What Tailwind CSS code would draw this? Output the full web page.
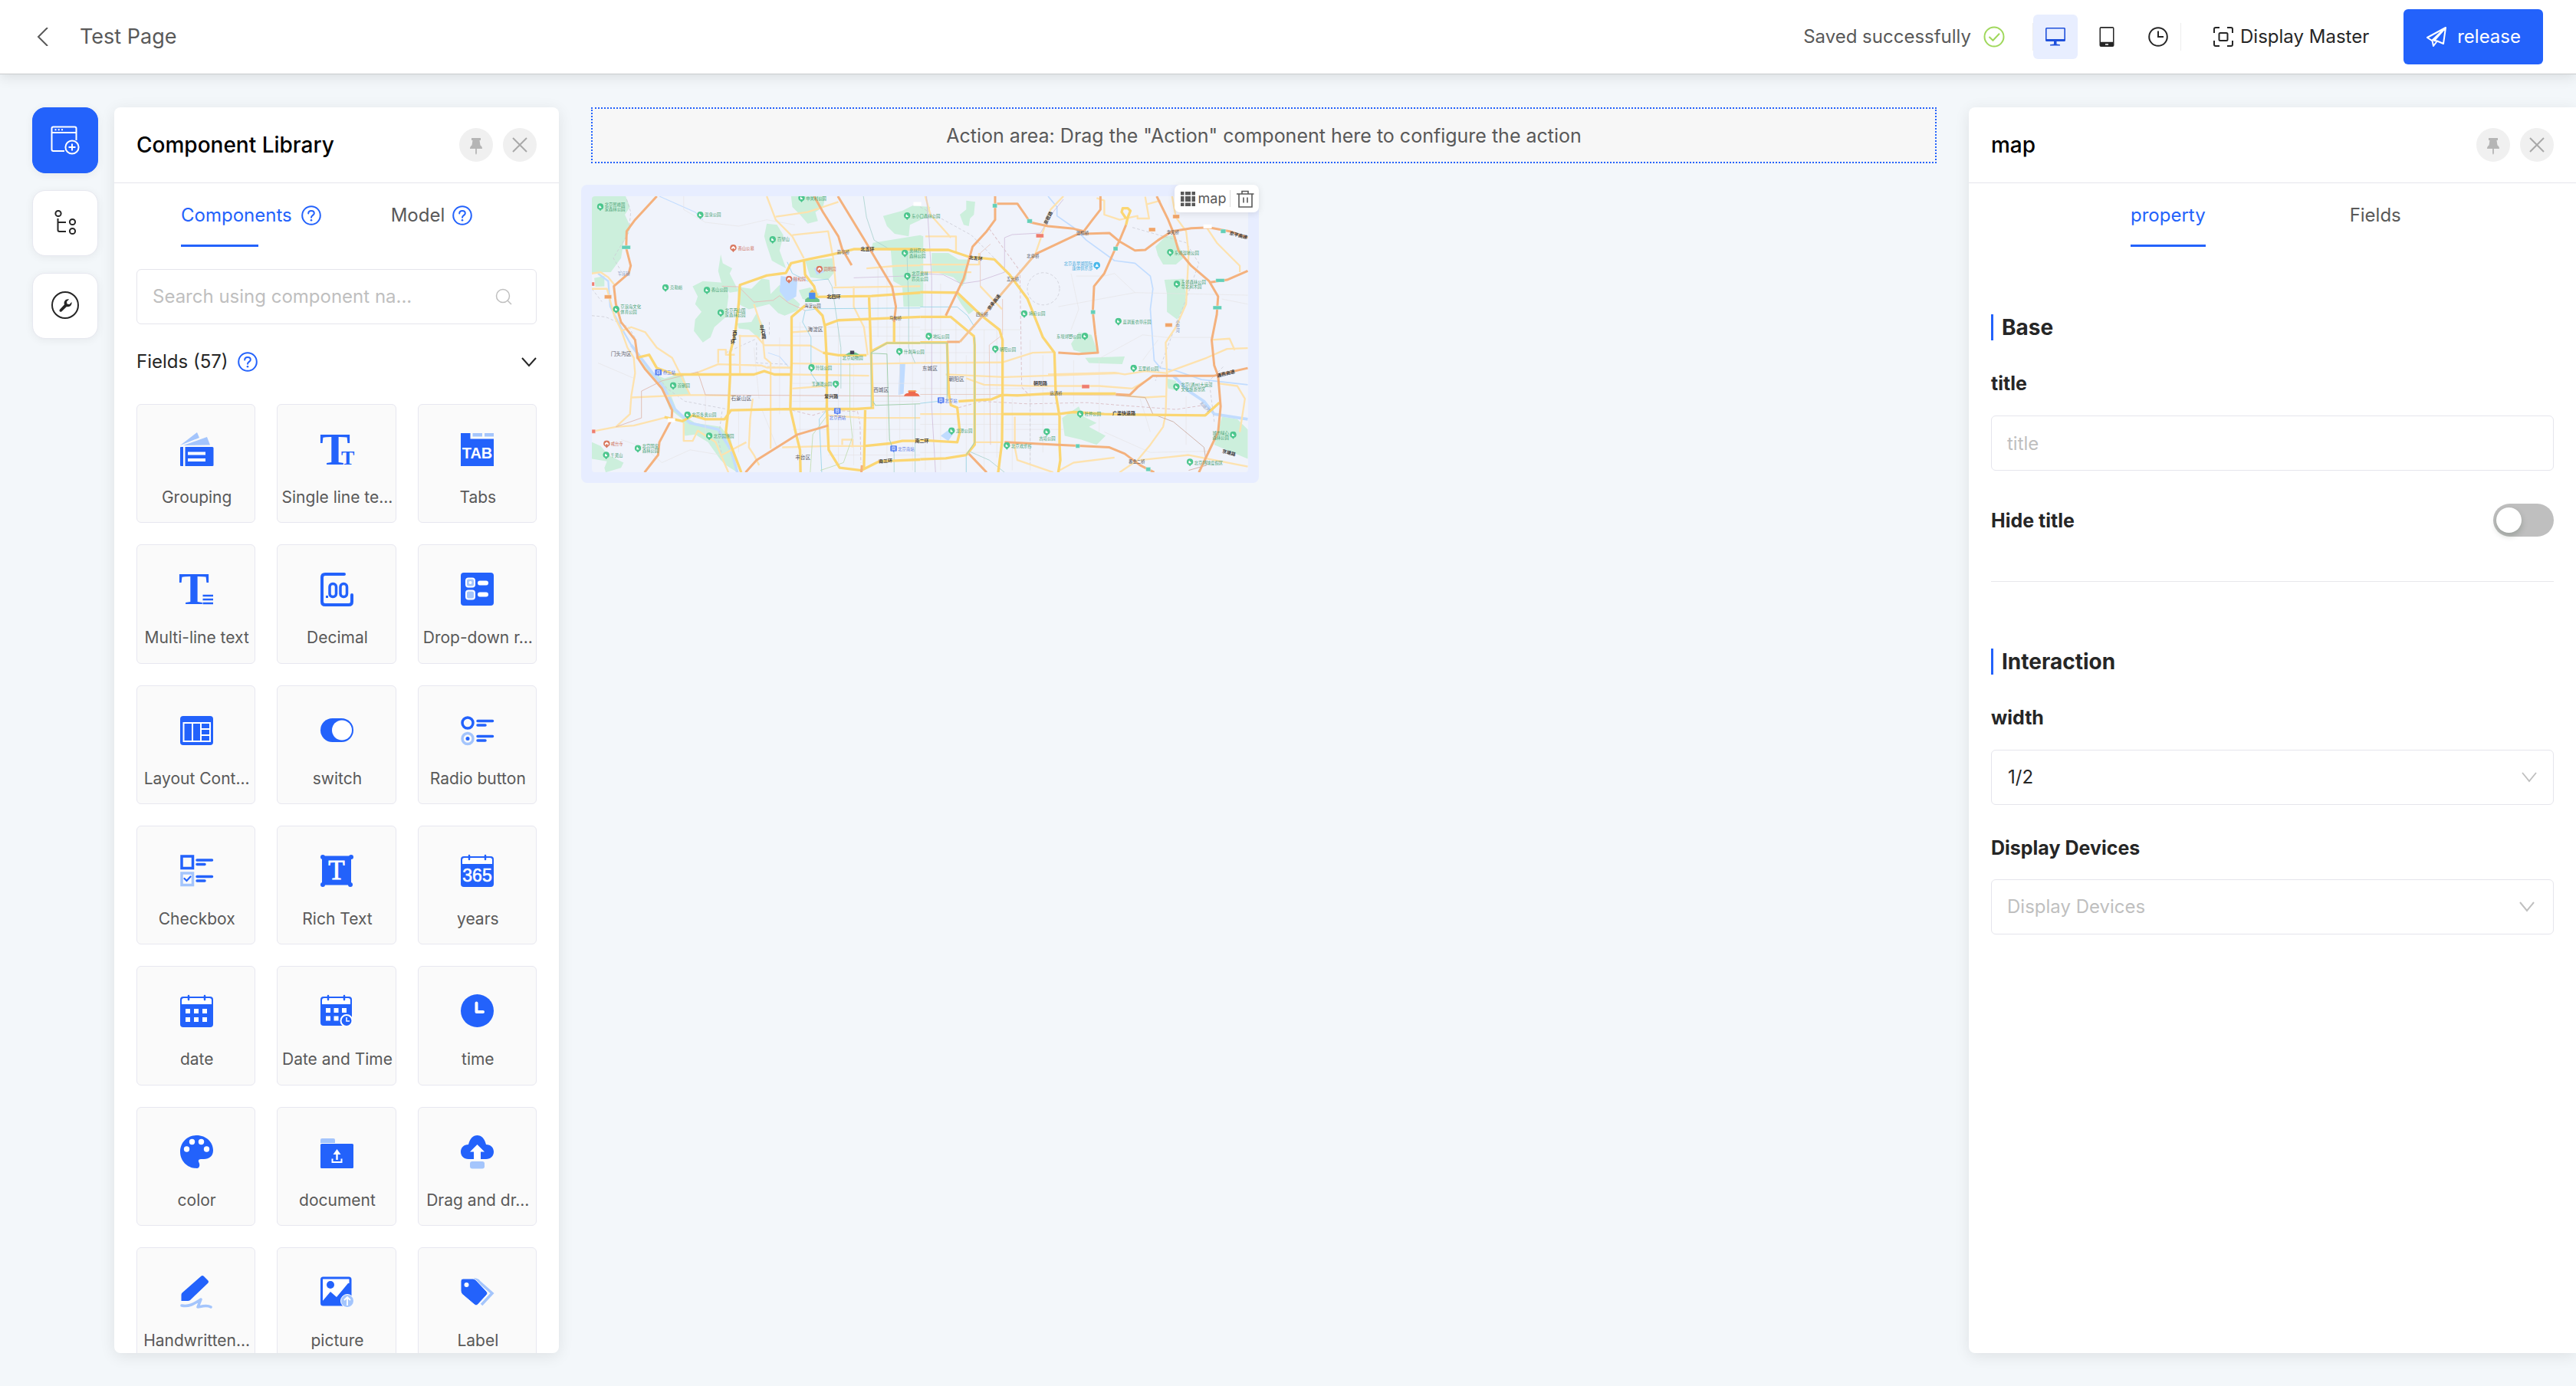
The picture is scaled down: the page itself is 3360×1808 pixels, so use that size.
<!DOCTYPE html>
<html lang="en">
<head>
<meta charset="utf-8">
<title>Test Page</title>
<script src="https://cdn.jsdelivr.net/npm/@tailwindcss/browser@4"></script>
</head>
<body class="flex h-screen flex-col overflow-hidden bg-[#f3f7fa] font-['Inter',sans-serif] text-[24px] leading-[36px] text-[#262626]">

<svg class="hidden" aria-hidden="true">
  <symbol id="help" viewBox="0 0 26 26" fill="none" stroke="#2362fb" stroke-width="2" stroke-linecap="round"><circle cx="13" cy="13" r="11.8"/><path d="M9.2 10.4C9.2 8.2 10.900 6.900 13 6.900s3.800 1.300 3.800 3.300c0 2.600-3.800 2.700-3.800 5.500"/><path d="M13 19.200v.1" stroke-width="2.600"/></symbol>
  <symbol id="pushpin" viewBox="0 0 44 44"><path fill="#b5b5b5" d="M16 13h12v3h-1.500l1 6.500c1.600 1 2.500 2.500 2.500 4.500h-7.100v6l-.9 2-.9-2v-6H14c0-2 .9-3.500 2.500-4.500l1-6.500H16z"/></symbol>
  <symbol id="cross" viewBox="0 0 44 44"><path fill="none" stroke="#a9a9a9" stroke-width="2" d="M13 13l18 18M31 13L13 31"/></symbol>
  <symbol id="pin" viewBox="0 0 28 32"><path fill="#4cc68d" d="M14 1a12.500 12.500 0 0 1 5 24l-5 6-5-6a12.500 12.500 0 0 1 5-24z"/><path fill="#fff" d="M9 19v-8l4-3v4l5 3v4z"/></symbol>
  <symbol id="pinr" viewBox="0 0 28 32"><path fill="#d9785f" d="M14 1a12.500 12.500 0 0 1 5 24l-5 6-5-6a12.500 12.500 0 0 1 5-24z"/><path fill="#fff" d="M7 12l7-5 7 5v7h-4v-4h-6v4H7z"/></symbol>
  <symbol id="rail" viewBox="0 0 28 30"><path fill="#5b83f2" d="M4 1h20q3 0 3 3v17q0 3-3 3h-7l-3 4-3-4H4q-3 0-3-3V4q0-3 3-3z"/><path fill="none" stroke="#fff" stroke-width="2" d="M9 6h10v11H9zM11 11h6M9 20l2-3M19 20l-2-3"/></symbol>
</svg>

<header class="z-10 flex h-[97px] shrink-0 items-center border-b border-[#c9cbcd] bg-white pr-[43px] pl-11 shadow-[0_4px_16px_rgba(0,0,0,0.10)]">
  <button aria-label="Back" class="size-6 text-[#595959]"><svg viewBox="0 0 24 24" class="size-6" fill="none" stroke="currentColor" stroke-width="2"><path d="M18 0L6 12l12 12"/></svg></button>
  <h1 class="ml-9 text-[27px] text-[#595959]">Test Page</h1>
  <div class="ml-auto flex items-center">
    <span class="text-[#595959]">Saved successfully</span>
    <svg class="ml-4 size-7" viewBox="0 0 28 28" fill="none" stroke="#a0d85c" stroke-width="2"><circle cx="14" cy="14" r="12.500"/><path d="M7.500 14l5 4.800 8.500-9"/></svg>
    <div class="ml-9 flex h-9 items-center gap-[9px] border-x border-[#ededed]">
      <button aria-label="Desktop" class="grid size-[58px] place-items-center rounded-[6px] bg-[#e8eeff]">
        <svg class="size-[26px]" viewBox="0 0 26 26"><path fill="#1f50db" fill-rule="evenodd" d="M1.500 1h23q1.500 0 1.500 1.500v15q0 1.500-1.500 1.500h-10v3.500l4.500.8V24.500H6v-1.200l5-.8V19H1.500Q0 19 0 17.500v-15Q0 1 1.500 1zM1.600 2.600v13.400h22.800V2.600z"/></svg>
      </button>
      <button aria-label="Tablet" class="grid size-[58px] place-items-center rounded-[6px]">
        <svg class="size-[26px]" viewBox="0 0 26 26"><path fill="#262626" fill-rule="evenodd" d="M5.500 0h15q2 0 2 2v22q0 2-2 2h-15q-2 0-2-2V2q0-2 2-2zM5 1.700v18h16v-18zM11 22.200h4v1.600h-4z"/></svg>
      </button>
      <button aria-label="History" class="grid size-[58px] place-items-center rounded-[6px]">
        <svg class="size-[26px]" viewBox="0 0 26 26" fill="none" stroke="#262626" stroke-width="2"><circle cx="13" cy="13" r="11.800"/><path d="M13 5.500V13h7"/></svg>
      </button>
    </div>
    <button class="ml-[42px] flex items-center gap-[9px] text-[#262626]">
      <svg class="size-[26px]" viewBox="0 0 26 26" fill="none" stroke="#262626" stroke-width="2"><path d="M1 8V3q0-2 2-2h5M18 1h5q2 0 2 2v5M25 18v5q0 2-2 2h-5M8 25H3q-2 0-2-2v-5"/><rect x="7.500" y="8" width="11" height="10" rx="1.500"/></svg>
      Display Master
    </button>
    <button class="ml-[45px] flex h-[72px] items-center gap-[13px] rounded-[6px] bg-[#2362fb] px-[29px] text-white">
      <svg class="size-7" viewBox="0 0 28 28" fill="none" stroke="#fff" stroke-width="2" stroke-linejoin="round"><path d="M26 2L2 15l6 4L26 2l-3 21-8-3.500-5 6.500-1.500-7M26 2L11 19l4 .5"/></svg>
      release
    </button>
  </div>
</header>

<main class="flex min-h-0 flex-1 pt-[43px] pb-[43px] pl-[42px]">

  <nav aria-label="Tools" class="flex shrink-0 flex-col gap-[22px] [&>button]:grid [&>button]:size-[86px] [&>button]:place-items-center [&>button]:rounded-[17px] [&>button]:border [&>button]:shadow-[0_2px_12px_rgba(0,0,0,0.06)]">
    <button aria-label="Component library" class="border-[#2362fb] bg-[#2362fb]">
      <svg class="size-[38px]" viewBox="0 0 38 38" fill="none" stroke="#fff" stroke-width="2"><path d="M18 33H3.500Q1.500 33 1.500 31V3.500Q1.500 1.500 3.500 1.500h28q2 0 2 2V19M1.500 9h32"/><path d="M5.500 5.300h2M9.700 5.300h2M14 5.300h2"/><circle cx="28" cy="28" r="8.600"/><path d="M28 23.500v9M23.500 28h9"/></svg>
    </button>
    <button aria-label="Outline" class="border-[#e7e8f0] bg-white">
      <svg class="size-[38px]" viewBox="0 0 38 38" fill="none" stroke="#262626" stroke-width="2"><circle cx="10" cy="6.500" r="3.600"/><circle cx="28.500" cy="17.500" r="3.600"/><circle cx="28.500" cy="29.500" r="3.600"/><path d="M9.500 13v15q0 2 2 2H20M9.500 18H20"/></svg>
    </button>
    <button aria-label="Settings" class="border-[#e7e8f0] bg-white">
      <svg class="size-[38px]" viewBox="0 0 38 38"><circle cx="19" cy="18" r="17" fill="none" stroke="#262626" stroke-width="2"/><path fill="#262626" d="M24 10.500l-3 3 .5 3 3 .5 3-3c.6 4-2.500 7-6.500 6l-6.500 6.300c-2 1.500-4-.5-2.500-2.500l6-6.500c-1.500-4 2-8 6-6.800z"/></svg>
    </button>
  </nav>

  <section aria-label="Component Library" class="ml-[21px] w-[580px] shrink-0 overflow-hidden rounded-lg bg-white shadow-[0_4px_20px_rgba(0,0,0,0.09)]">
    <div class="flex h-[99px] items-center border-b border-[#e5e5ec] px-[29px]">
      <h2 class="text-[28px] font-medium text-black">Component Library</h2>
      <button aria-label="Pin panel" class="ml-auto size-11 rounded-full bg-[#f0f0f0]"><svg class="size-full"><use href="#pushpin"/></svg></button>
      <button aria-label="Close panel" class="ml-[13px] size-11 rounded-full bg-[#f0f0f0]"><svg class="size-full"><use href="#cross"/></svg></button>
    </div>
    <div class="flex h-[83px] gap-[91px] pt-6 pl-[87px]">
      <button class="relative flex items-center gap-3 self-start text-[#2362fb]">Components <svg class="size-[26px]"><use href="#help"/></svg><span class="absolute top-[56px] left-0 h-[3px] w-[101px] bg-[#2362fb]"></span></button>
      <button class="flex items-center gap-[10px] self-start text-[#595959]">Model <svg class="size-[26px]"><use href="#help"/></svg></button>
    </div>
    <div class="mx-[29px] mt-[29px] flex h-[72px] items-center rounded-[6px] border border-[#e5e5ec] pr-[31px] pl-[20px]">
      <input type="search" aria-label="Search components" placeholder="Search using component na..." class="min-w-0 flex-1 bg-transparent outline-none placeholder:text-[#bfbfbf]">
      <svg class="size-[22px]" viewBox="0 0 22 22" fill="none" stroke="#bfbfbf" stroke-width="1.500"><circle cx="10" cy="10" r="8.500"/><path d="M16 16l5 5"/></svg>
    </div>
    <button class="mt-[31px] flex h-9 w-full items-center gap-3 px-[29px]">Fields (57) <svg class="size-[26px]"><use href="#help"/></svg><svg class="ml-auto size-5" viewBox="0 0 20 20" fill="none" stroke="#262626" stroke-width="2"><path d="M1 5l9 10 9-10"/></svg></button>

    <div class="mx-[29px] mt-[37px] grid grid-cols-3 gap-7 text-[21px] leading-8 text-[#595959] [&_svg]:size-11 [&_svg]:overflow-visible [&>button]:flex [&>button]:aspect-square [&>button]:min-w-0 [&>button]:flex-col [&>button]:items-center [&>button]:gap-[25px] [&>button]:whitespace-nowrap [&>button]:rounded-[6px] [&>button]:border [&>button]:border-[#e7e7f0] [&>button]:bg-[#fafafa] [&>button]:pt-[36px] [&>button]:pl-[2px]">
      <button><svg viewBox="0 0 44 44"><path fill="#a4c5fc" d="M0 17L22 0l3 7zM4 17L35 6l4 10.500z"/><path fill="#2362fb" d="M1 19h3v25H1q-1 0-1-1V20q0-1 1-1zM6.500 19H42q1.500 0 1.500 1.500V43q0 1-1.500 1H6.500z"/><path stroke="#fff" stroke-width="4" d="M10 27.500h23M10 36h23"/></svg>Grouping</button>
      <button><svg viewBox="0 0 44 44" fill="#2362fb" class="font-['Liberation_Serif',serif] font-bold"><text x="-1" y="42" font-size="60">T</text><text x="27" y="42" font-size="26">T</text></svg>Single line te...</button>
      <button><svg viewBox="0 0 44 44" class="font-['Liberation_Sans',sans-serif] font-bold"><path fill="#2362fb" d="M0 1h12.500v7.500H43V44H0z"/><path fill="#a4c5fc" d="M15.500 1H28v4.500H15.500zM31 1h12v4.500H31z"/><text x="21.500" y="34" font-size="20" text-anchor="middle" fill="#fff">TAB</text></svg>Tabs</button>

      <button><svg viewBox="0 0 44 44" fill="#2362fb" class="font-['Liberation_Serif',serif] font-bold"><text x="-2" y="41" font-size="60">T</text><path fill="none" stroke="#2362fb" stroke-width="2.500" d="M29.500 30H43M29.500 35H43M29.500 40H43"/></svg>Multi-line text</button>
      <button><svg viewBox="0 0 44 44" fill="none" stroke="#2362fb" stroke-width="4" stroke-linecap="round"><path d="M31 2H6Q2 2 2 6v32q0 4 4 4h31q4 0 4-4v-9"/><rect x="12" y="14.500" width="8.500" height="17" rx="4" stroke-width="3.500"/><rect x="26" y="14.500" width="8.500" height="17" rx="4" stroke-width="3.500"/><path stroke-width="3" stroke-linecap="butt" d="M7 31.500h3"/></svg>Decimal</button>
      <button><svg viewBox="0 0 44 44"><rect y="0" width="43" height="43" rx="4" fill="#2362fb"/><rect x="7" y="7.500" width="11" height="11" rx="3" fill="#a4c5fc" stroke="#fff" stroke-width="2"/><rect x="7" y="23.500" width="11" height="11" rx="3" fill="#a4c5fc" stroke="#fff" stroke-width="2"/><circle cx="12.500" cy="13" r="2" fill="#fff"/><path stroke="#fff" stroke-width="6" stroke-linecap="round" d="M25 13.500h8M25 28.500h8"/></svg>Drop-down r...</button>

      <button><svg viewBox="0 0 44 44"><rect y="3" width="43" height="38" rx="4" fill="#2362fb"/><path fill="#fff" d="M3.500 11h36.500v26H3.500z"/><path fill="#2362fb" d="M5.500 13h9.500v22H5.500zM17 13h9v22h-9zM28 13h10v6H28zM28 21h10v6H28zM28 29h10v6H28z"/></svg>Layout Cont...</button>
      <button><svg viewBox="0 0 44 44"><rect y="6" width="43" height="31" rx="15.500" fill="#2362fb"/><circle cx="28" cy="21.500" r="13" fill="#fff"/></svg>switch</button>
      <button><svg viewBox="0 0 44 44" fill="none" stroke="#2362fb" stroke-linecap="round"><circle cx="9" cy="12" r="7" stroke-width="3.500"/><circle cx="9" cy="32.500" r="7" stroke="#a4c5fc" stroke-width="3.500"/><circle cx="9" cy="32.500" r="2.500" fill="#2362fb" stroke="none"/><path stroke-width="3.500" d="M22 9.500h19.500M22 15h10M22 29.500h19.500M22 35h10"/></svg>Radio button</button>

      <button><svg viewBox="0 0 44 44" fill="none" stroke="#2362fb" stroke-linecap="round"><rect x="2" y="3" width="14.500" height="15.500" stroke-width="3.500"/><rect x="2" y="25" width="14.500" height="15.500" stroke="#a4c5fc" stroke-width="3.500"/><path stroke-width="2.200" d="M5.500 32l3 3 5-5.500"/><path stroke-width="3.500" d="M22 8h19.500M22 13.500h10M22 29.500h19.500M22 35h10"/></svg>Checkbox</button>
      <button><svg viewBox="0 0 44 44" fill="#2362fb" class="font-['Liberation_Serif',serif]"><rect x="2" y="2.500" width="38" height="38"/><circle cx="3" cy="4" r="3"/><circle cx="40" cy="4" r="3"/><circle cx="3" cy="40" r="3"/><circle cx="39" cy="40" r="3"/><text x="21" y="33" font-size="35" text-anchor="middle" fill="#fff" stroke="#fff" stroke-width=".8">T</text></svg>Rich Text</button>
      <button><svg viewBox="0 0 44 44" class="font-['Liberation_Sans',sans-serif]"><path fill="#2362fb" d="M4 3h35q4 0 4 4v32q0 4-4 4H4q-4 0-4-4V7q0-4 4-4z"/><path fill="#fff" d="M2 13V8q0-3 3-3h33q3 0 3 3v5z"/><path stroke="#2362fb" stroke-width="2.500" stroke-linecap="round" d="M11 2v5M32 2v5"/><text x="21.500" y="36" font-size="23" text-anchor="middle" fill="#fff" stroke="#fff" stroke-width=".6">365</text></svg>years</button>

      <button><svg viewBox="0 0 44 44"><path fill="#2362fb" d="M4 3h35q4 0 4 4v32q0 4-4 4H4q-4 0-4-4V7q0-4 4-4z"/><path fill="#fff" d="M2 13V8q0-3 3-3h33q3 0 3 3v5z"/><path stroke="#2362fb" stroke-width="2.500" stroke-linecap="round" d="M11 2v5M32 2v5"/><path stroke="#fff" stroke-width="6" stroke-dasharray="6 5" d="M7 22h28M7 33h28"/></svg>date</button>
      <button><svg viewBox="0 0 44 44"><path fill="#2362fb" d="M4 3h33q4 0 4 4v30q0 4-4 4H4q-4 0-4-4V7q0-4 4-4z"/><path fill="#fff" d="M2 13V8q0-3 3-3h31q3 0 3 3v5z"/><path stroke="#2362fb" stroke-width="2.500" stroke-linecap="round" d="M10 2v5M31 2v5"/><path stroke="#fff" stroke-width="6" stroke-dasharray="6 4.500" d="M7 21h28M7 31.500h17"/><circle cx="34" cy="34.500" r="7.500" fill="#2362fb" stroke="#fff" stroke-width="2"/><path fill="none" stroke="#fff" stroke-width="1.500" d="M34 30v5h4"/></svg>Date and Time</button>
      <button><svg viewBox="0 0 44 44"><circle cx="21.500" cy="21.500" r="21.500" fill="#2362fb"/><path fill="none" stroke="#fff" stroke-width="4" stroke-linecap="round" stroke-linejoin="round" d="M20.500 11.500v11.500h8.500"/></svg>time</button>

      <button><svg viewBox="0 0 44 44"><path fill="#2362fb" d="M21.500 0C34 0 43 9 43 19.500 43 27 38 31 31 31h-4c-3 0-4 2-2.500 4.500 1.500 3 1 7.500-3 7.500C9 43 0 33 0 21.500 0 9.500 9 0 21.500 0z"/><g fill="#fff"><circle cx="15.500" cy="8.500" r="3.700"/><circle cx="27.500" cy="8.500" r="3.700"/><circle cx="8.500" cy="18" r="3.700"/><circle cx="34.500" cy="18" r="3.700"/></g></svg>color</button>
      <button><svg viewBox="0 0 44 44"><path fill="#a4c5fc" d="M2 4h15q2 0 2 2v4H0V6q0-2 2-2z"/><rect y="11" width="43" height="32" rx="1.500" fill="#2362fb"/><path fill="#fff" d="M21.500 18l5 7h-3.800v7h-2.400v-7h-3.800z"/><path fill="none" stroke="#fff" stroke-width="2" d="M15.500 30.500v4.500h12v-4.500"/></svg>document</button>
      <button><svg viewBox="0 0 44 44"><path fill="#2362fb" d="M10 12C12 4 16 0 21.500 0S31 4 33 12c6 0 10 4 10 9.500S39 31 33 31H10C4 31 0 27 0 21.500S4 12 10 12z"/><path fill="#fff" d="M21.500 12l9.500 9.500h-5V31.500h-9V21.500h-5z"/><rect x="12" y="34" width="19" height="9.500" rx="3" fill="#a4c5fc"/></svg>Drag and dr...</button>

      <button><svg viewBox="0 0 44 44"><path fill="#2362fb" d="M27 1q2-2 4 0l5 5q2 2 0 4L13 32q-1.500 1-3 1H1.500V25q0-1.500 1-2.500z"/><path fill="none" stroke="#a4c5fc" stroke-width="3.500" stroke-linecap="round" stroke-linejoin="round" d="M2 39c9 2 16-2 25-8l-4 10c6-1 12-3 17 0"/></svg>Handwritten...</button>
      <button><svg viewBox="0 0 44 44"><rect x="1.500" y="3" width="37.500" height="35" rx="2" fill="#fff" stroke="#2362fb" stroke-width="3"/><circle cx="13" cy="12" r="5" fill="#2362fb"/><path fill="#2362fb" d="M2 34l11-13 8 7 15-18h4v29H2z"/><circle cx="35" cy="33" r="8.500" fill="#a4c5fc" stroke="#fff" stroke-width="1"/><path fill="none" stroke="#fff" stroke-width="1.800" d="M35 39V28M31 32l4-4 4 4"/></svg>picture</button>
      <button><svg viewBox="0 0 44 44"><path fill="none" stroke="#a4c5fc" stroke-width="3.500" d="M17 5q5 0 7 3l17 15-14 15"/><path fill="#2362fb" stroke="#fafafa" stroke-width="1" d="M3 4h13q2 0 4 2l14 15q2 2 0 4L22 38q-2 2-4 0L1.500 24Q0 22 0 20V7q0-3 3-3z"/><circle cx="7.500" cy="12" r="3" fill="#fff"/></svg>Label</button>
    </div>
  </section>

  <section aria-label="Canvas" class="min-w-0 flex-1 px-[42px]">
    <p class="flex h-[73px] items-center justify-center border-2 border-dotted border-[#2362fb] bg-[#f7f7f7] text-[25px] text-[#595959]">Action area: Drag the "Action" component here to configure the action</p>
    <div class="-mx-[13px] mt-7 grid grid-cols-2 gap-[14px]">
      <div class="relative rounded-lg bg-[#e7edff] px-[14px] pt-[15px] pb-[14px]">
        <svg viewBox="36 48 2565 1080" class="block w-full rounded-sm bg-[#f0f3fb] font-['Noto_Sans_CJK_SC',sans-serif]" role="img" aria-label="Map of Beijing" stroke-linejoin="round">
          <!-- parks -->
          <g fill="#ccefdc">
            <path d="M36 48H168L185 90 165 120 188 170 160 230 150 290 110 345 60 345 36 352zM45 368L85 360V400L50 402zM540 275L548 310 585 330 575 350 600 400 610 420 575 425 545 395 530 340zM430 400L470 380 540 385 565 400 570 440 560 520 515 560 500 600 470 620 435 575 440 530 465 500 440 470 450 440zM605 402L660 410 700 370 730 375 735 430 770 395 850 470 840 495 790 515 765 505 730 470 650 490 610 470zM605 545L660 540 680 505 710 560 690 605 650 570 610 565zM710 205L720 155 760 160 785 200 770 260 795 330 740 300 720 240zM815 48H950L940 90 910 110 920 145 880 155 850 120 820 90zM870 300L980 290 985 345 960 375 890 365zM1175 125L1250 105 1290 85 1360 90 1345 130 1280 160 1275 205 1220 195 1190 165zM1135 230L1320 200 1332 205V480H1255L1250 400 1215 380 1205 260 1130 250zM215 680L270 740 320 760 390 740 420 825 345 825 370 890 440 935 540 950 580 1000 605 1128 560 1100 540 1080 490 1010 440 980 400 985 390 920 340 880 310 800zM36 1010L70 1025 100 1060 160 1090 150 1110 90 1128 85 1110 95 1085 36 1075zM845 415L890 405 925 430 900 460 860 450z"/>
            <g transform="translate(1320 -30)"><path d="M155 150L180 130V95L215 100 210 150 195 165 190 195 170 190zM45 300L110 300 150 325 190 325 180 400 165 430 130 395 45 370zM135 455L215 520 190 540 160 500zM920 275L960 235 990 230 1020 290 1035 315 1000 345 950 345 930 310zM955 405L1030 400 1040 460 1035 510 1005 560 965 530V460zM590 655L620 610 670 620 695 690 650 695 600 680zM645 710L800 705 790 735 660 730zM555 945L620 900 640 940 690 965 660 980 725 1015 690 1050 630 1030 565 1015zM1180 940L1240 950 1281 990V1105L1150 1050zM960 790L1000 800 1010 840 970 830z"/></g>
          </g>
          <!-- water -->
          <path fill="#bfdbff" d="M775 360L840 370 835 440 800 460 770 420zM1240 705L1262 700 1255 820 1235 825zM905 330l30-10 10 25-30 10zM1400 985l40-30 10 20-20 30z"/>
          <g fill="none" stroke="#c1dcff" stroke-width="11">
            <path d="M60 350L100 380 108 480 150 560 190 630" stroke-width="7"/><path d="M190 630L235 690 320 800 360 880 420 935 530 960 580 1040 605 1128"/>
            <path d="M300 48L440 110 470 140M725 660L770 675 805 715" stroke-width="3"/>
            <g transform="translate(1320 -30)"><path stroke-width="5" d="M500 78L535 120V155L600 200 650 250 760 330 840 340 900 390 910 440 900 520 915 720 940 750 1000 760 1100 795 1281 815"/><path d="M990 780L1050 840 1110 880 1150 930 1281 950"/></g>
          </g>
          <!-- minor streets -->
          <g fill="none" stroke="#e6e4e6" stroke-width="2">
            <path d="M395 48V100L480 150 610 165 720 140 830 160M850 540V1000M770 600V900M1000 560V1110M1060 700V1100M1155 330V600M1190 330V1110M1240 530V1000M1290 530V1120M820 560H1320M820 595H1320M820 780H1320M820 850H1320M820 960H1320M960 1060H1320M150 1000L240 1030 310 1090 420 1040 540 1060M670 640L690 840M60 700L200 760M610 880V1050M480 830V980M700 880L760 1030"/>
            <g transform="translate(1320 -30)"><path d="M20 420V1150M80 420V1150M140 560V850M180 700V1150M250 600V1150M300 600V1100M360 870V1150M430 640V1150M480 700V1080M600 720V900M700 720V1000M0 600H400M0 690H320M0 830H500M0 970H540M0 1080H320M330 990H560M540 510L840 455 1281 465M610 390L720 390 760 380 840 455M705 710L870 620 960 630 1150 630M590 380L620 520 590 600M860 870L900 1000M1040 860V1050M930 640L870 720M720 1000L900 1080 1130 1075M1180 480L1281 500"/></g>
          </g>
          <g fill="none" stroke="#cdcdd6" stroke-width="2.500" stroke-dasharray="11 8">
            <path d="M172 60L188 110 180 190 120 290 150 340M36 515L90 520 180 560 210 610M300 760L330 800 400 850 560 880M545 890L530 1000 545 1060M680 620V700L800 705M590 705L810 720M36 410L75 460M560 660L680 605M730 540V590"/>
            <g transform="translate(1320 -30)"><circle cx="482" cy="440" r="63"/><path d="M0 120L200 230 340 370M830 200L1040 260 1090 340 1040 480 970 660 920 800M430 1130V870M1150 960L1130 800 1190 740"/></g>
          </g>
          <g fill="none" stroke="#dcc4cb" stroke-width="3" stroke-dasharray="12 8">
            <path d="M820 885L900 905 960 885 1075 890 1085 940 1088 1090"/>
            <g transform="translate(1320 -30)"><path d="M270 205L390 370 397 825 430 860M150 905L240 880 420 890 650 885 1000 912 1110 895"/></g>
          </g>
          <!-- secondary roads -->
          <g fill="none" stroke="#fde2ae" stroke-width="7">
            <path d="M36 350L70 345 100 365 125 395M36 410L95 410 125 520 150 570 175 640 200 680 205 740 190 830 185 900 130 950 36 968M130 950L200 945 330 912M150 575L190 560 245 580 290 640 350 680 380 740 420 825M190 835L420 825 600 828M610 595H680L710 630 890 632 950 665M670 470L700 560 712 680 735 700V1035M720 48L755 140 820 205 865 290M755 128L880 110 1000 70M820 200L960 185 980 290 990 400M980 405L1320 400M1110 330L1230 320 1320 318M530 700V648H560V668H595M430 745L530 705 700 710 720 718H815M820 702L1050 705 1320 700M820 745L1120 750M665 840L655 920 650 1030 670 1060 690 1100M780 1030L960 1025 1100 1025M960 905L1100 915 1320 915M395 935V1005L430 1005 450 965 520 1010 545 1070 570 1128M545 1060L640 1010M1060 400V480L1100 560 1115 670M820 580L890 575M820 800L950 790M1015 1020V1000H1055V1030M615 590V740"/>
            <g transform="translate(1320 -30)"><path d="M0 730L320 728 440 690 520 688M100 775L330 785 780 770M180 790L250 815 440 820 700 820 830 830 900 790M500 775L760 768 800 775 880 762 970 770M0 930H320M780 1158L850 1110 900 1050 950 980 960 930 965 770 960 650 1000 590 1040 500 1050 300 1040 215 1000 160 985 78M765 855L880 865 960 860M1120 200L1160 260 1250 350V375M1140 640L1210 635 1230 680M970 765L1120 710 1200 675 1281 672M690 85L720 95 720 150 780 170 850 155V165H895L880 80M885 110L940 95M860 1110L1050 1090 1281 1135M1165 810L1240 820 1270 870 1250 1000M210 1040H320M0 345H230V300M20 235H140V300M0 375H200M450 305L510 130 560 78M20 78L40 150 120 240M235 430L320 520M370 940V1060L380 1110 520 1158M545 1150L600 1120 760 1100"/></g>
          </g>
          <!-- metro lines -->
          <g fill="none" stroke-width="2.500">
            <path stroke="#a9d3cf" d="M1098 48L1110 130 1140 220 1200 255M960 372L975 400 990 500 1010 640V800M1268 260L1275 480 1275 640 1300 700M1218 1040V1128M1300 860V1128"/>
            <path stroke="#95d3e6" d="M800 305L820 350 880 380 960 372M1320 485L920 488 870 495 860 540 893 600 893 740 920 780 955 800 950 890 925 920 935 1128"/>
            <path stroke="#eab4b4" d="M545 400L610 402 670 462 745 455 770 437 805 465 870 495"/>
            <path stroke="#ddb4a8" d="M130 950L230 915V810L310 770 450 735 480 825 1320 830"/>
            <path stroke="#d2c2dc" d="M1060 367L1320 358"/><path stroke="#bfdcae" d="M1045 700V900L1055 990 1020 1090 930 1120M960 900L900 980 890 1128"/>
            <g transform="translate(1320 -30)"><path stroke="#d0bedb" d="M0 380L90 385 160 420 230 410 330 375V240L360 228 470 222 520 140 560 90M25 78L45 400V900L60 1158"/><path stroke="#95d3e6" d="M0 511H145L185 545 213 590M0 888L70 880 90 870M180 1090V1158"/><path stroke="#e6c6bd" d="M0 853H330L765 857M235 430V300L275 265M322 480V620L270 660 275 1050"/><path stroke="#c9a79a" d="M765 857L880 865 910 930 990 960 1110 1060 1120 1130 1050 1150"/><path stroke="#a9d3cf" d="M190 1075L270 1110 330 1158"/></g>
          </g>
          <!-- ring roads and trunk roads -->
          <g fill="none" stroke="#fbd672" stroke-width="10">
            <path d="M1320 255H1060L980 275 880 295 815 310 795 348 720 358 615 395 610 470 597 580 577 660V740L570 880 560 970 620 1128M1320 425L1130 438 905 442M865 295L870 355 905 400 915 440M870 475L817 520V690L812 880 835 980 850 1040 852 1128M905 480L938 515 948 560 955 700V880L962 1040 1005 1110 1090 1120 1160 1085 1320 1078M948 552L1000 533 1320 520M1120 440L1128 660 1135 870M210 680L260 668 290 720 360 745H670L710 732 750 745H815M320 912L390 928 430 905 480 920H555L580 885 810 880H1070L1140 875M1105 880L1100 1110M1100 1025L1200 1015 1250 1005 1320 1005M1218 530V620M1128 655L1190 622H1320M940 660L1000 670 1110 670"/>
            <g transform="translate(1320 -30)"><path d="M0 288H110L190 315 290 325 350 385 420 480 480 630 525 690 530 850 545 940V1050L548 1110 540 1158M0 453L145 455 240 545 310 600 322 640V850L320 1040 305 1158M0 550H120L210 625 213 660V1050L180 1090 100 1103 0 1107M0 650H105L112 850 120 895 145 905 155 1000 145 1040 0 1032M150 880L280 872 320 855 380 857 500 850H765M325 930H540L600 922 720 930 830 932 1115 935 1170 885M805 190L812 160 822 135 812 125H792L788 140 805 165"/></g>
          </g>
          <g fill="none" stroke="#f4b17d" stroke-width="9">
            <path d="M290 48L205 140 172 185 170 250 188 320 180 350 122 400 130 470 150 540 205 610 215 680 245 725 310 800 350 885 348 920 300 1010 295 1060 242 1128M905 48L940 110 1000 205 1015 255 1052 318M998 48L1100 215 1150 300 1210 400 1225 480 1218 540M637 1128L680 1080 840 980 960 945M1090 1128L1092 1100"/>
            <g transform="translate(1320 -30)"><path d="M293 78V170L260 215 205 275 170 400 100 545M300 107H380L410 150 430 180 500 195 600 205 640 215M705 78V130L670 175 640 215 450 305M640 225L740 222 780 255 840 290 880 288 930 250 985 215 1060 203 1130 200 1210 215 1281 240M805 190L778 255 760 290 720 380 680 430 675 530 685 620 695 690 620 695 540 690M925 78L970 170 990 220 1010 290 1060 350 1130 410 1165 470 1160 540 1140 640 1150 740 1165 780 1175 900 1165 1000 1090 1158M1130 415L1200 405 1281 370M765 852L820 855 850 825 910 780H1150L1281 750M330 1040L540 1050 740 1060 800 1085 860 1130 915 1158M190 1085L260 1158M155 648H105"/><path stroke="#f5c595" d="M450 305L250 540 155 648"/></g>
          </g>
          <path fill="none" stroke="#a3cfae" stroke-width="3" d="M1128 875V660L1190 622H1425V850M1320 860L1145 866 1135 850M1533 600V1010L1500 1060M1128 662L1190 665 1200 1000 1215 1040"/>
          <!-- road shields -->
          <g stroke="#fff" stroke-width="1"><path fill="#63cfb8" d="M153 241h34v14h-34zM1603 77h18v16h-18zM1738 137h20v16h-20zM2075 245h18v16h-18zM1987 493h18v16h-18zM2495 177h20v16h-20zM2476 370h34v14h-34zM2465 477h34v14h-34zM1928 1017h16v16h-16zM2203 1108h18v16h-18z"/><path fill="#f0a468" d="M85 434h28v15H85zM2308 120h26v15h-26zM2214 171h26v15h-26zM2278 544h28v15h-28z"/><path fill="#ee7d6f" d="M36 384h10v15H36zM36 960h14v15H36zM1773 195h30v15h-30zM1952 785h30v15h-30z"/><path fill="#fff" d="M333 917h28v14h-28zM2428 159h32v14h-32zM1294 71h30v14h-30z"/></g>
          <!-- landmarks -->
          <path fill="#ee6a4f" d="M1256 830q5-12 18-12v-10h28v10q14 2 15 12z"/><path fill="#f5a35a" d="M1270 812h38l-6-5h-26z"/>
          <path fill="#6cc28b" d="M870 452l10-8h34l12 8v10h-56zM1027 668q28-22 56 0z"/><rect x="885" y="424" width="25" height="26" rx="4" fill="#4b8df0"/><path fill="#efb64e" d="M886 424l12-12 12 12z"/><path fill="#444455" d="M1046 652h16v14h-16z"/>
          <!-- pins -->
          <g>
            <use href="#pin" x="55" y="75" width="28" height="32"/><use href="#pin" x="446" y="107" width="28" height="32"/><use href="#pin" x="729" y="203" width="28" height="32"/><use href="#pin" x="842" y="41" width="28" height="32"/><use href="#pin" x="310" y="391" width="28" height="32"/><use href="#pin" x="472" y="401" width="28" height="32"/><use href="#pin" x="526" y="489" width="28" height="32"/><use href="#pin" x="117" y="476" width="28" height="32"/><use href="#pin" x="881" y="704" width="28" height="32"/><use href="#pin" x="976" y="768" width="28" height="32"/><use href="#pin" x="340" y="774" width="28" height="32"/><use href="#pin" x="396" y="889" width="28" height="32"/><use href="#pin" x="481" y="971" width="28" height="32"/><use href="#pin" x="78" y="1046" width="28" height="32"/><use href="#pin" x="202" y="1020" width="28" height="32"/><use href="#pin" x="1225" y="641" width="28" height="32"/><use href="#pin" x="1255" y="110" width="28" height="32"/><use href="#pin" x="1246" y="256" width="28" height="32"/><use href="#pin" x="1256" y="346" width="28" height="32"/>
            <use href="#pinr" x="575" y="236" width="28" height="32"/><use href="#pinr" x="912" y="319" width="28" height="32"/><use href="#pinr" x="793" y="358" width="28" height="32"/><use href="#pinr" x="80" y="1002" width="28" height="32"/>
            <use href="#rail" x="282" y="724" width="28" height="30"/><use href="#rail" x="982" y="875" width="28" height="30"/><use href="#rail" x="1202" y="1022" width="28" height="30"/><use href="#rail" x="1387" y="833" width="28" height="30"/>
            <g transform="translate(1320 -30)"><use href="#pin" x="20" y="611" width="28" height="32"/><use href="#pin" x="280" y="661" width="28" height="32"/><use href="#pin" x="393" y="523" width="28" height="32"/><use href="#pin" x="630" y="611" width="28" height="32"/><use href="#pin" x="761" y="553" width="28" height="32"/><use href="#pin" x="964" y="283" width="28" height="32"/><use href="#pin" x="990" y="407" width="28" height="32"/><use href="#pin" x="821" y="736" width="28" height="32"/><use href="#pin" x="988" y="809" width="28" height="32"/><use href="#pin" x="612" y="915" width="28" height="32"/><use href="#pin" x="481" y="985" width="28" height="32"/><use href="#pin" x="109" y="981" width="28" height="32"/><use href="#pin" x="325" y="1039" width="28" height="32"/><use href="#pin" x="1210" y="997" width="28" height="32"/><use href="#pin" x="1041" y="1103" width="28" height="32"/><path fill="#49b8ea" d="M691 335a13 13 0 0 1 5 25l-5 6-5-6a13 13 0 0 1 5-25z"/><path fill="#fff" d="M684 354l7-12 7 12z"/></g>
          </g>
          <!-- place names -->
          <g font-size="16" fill="#43a071">
            <text x="86" y="87">北京鹫峰国</text><text x="86" y="106">家森林公园</text><text x="477" y="127">温泉公园</text><text x="761" y="223">百望山</text><text x="873" y="63">中关村公园</text><text x="342" y="411">克勒峪</text><text x="503" y="421">香山公园</text><text x="557" y="500">北京西山国</text><text x="557" y="519">家森林公园</text><text x="148" y="487">京浪岛文化</text><text x="148" y="506">体育公园</text><text x="911" y="725">玲珑公园</text><text x="895" y="788">玉渊潭公园</text><text x="371" y="795">首钢园</text><text x="427" y="910">北京冬奥公园</text><text x="512" y="992">北京园博园</text><text x="109" y="1067">千灵山</text><text x="233" y="1031">北宫国家</text><text x="233" y="1050">森林公园</text><text x="1256" y="662">什刹海公园</text><text x="1286" y="131">东小口森林公园</text><text x="1277" y="268">奥林匹克</text><text x="1277" y="287">森林公园</text><text x="1287" y="358">北京奥林</text><text x="1287" y="377">匹克公园</text><text x="1016" y="688">北京动物园</text>
            <g transform="translate(1320 -30)"><text x="50" y="633">地坛公园</text><text x="310" y="683">朝阳公园</text><text x="425" y="544">将府公园</text><text x="533" y="632">东坝郊野公园</text><text x="792" y="575">蓝调薰衣草庄园</text><text x="994" y="305">东郊湿地公园</text><text x="1021" y="419">东郊森林公园</text><text x="1021" y="438">华北树木园</text><text x="852" y="758">五里桥公园</text><text x="1020" y="821">北京(通州)大运河</text><text x="1020" y="840">文化旅游景区</text><text x="643" y="937">杜仲公园</text><text x="465" y="1031">古塔公园</text><text x="140" y="1002">龙潭公园</text><text x="356" y="1061">北京欢乐谷</text><text x="1143" y="1010">城市绿心</text><text x="1143" y="1029">森林公园</text><text x="1072" y="1126">北京环球度假区</text></g>
          </g>
          <g font-size="16" fill="#cf6f5a"><text x="607" y="258">香山公墓</text><text x="943" y="340">圆明园</text><text x="824" y="379">颐和园</text><text x="110" y="1023">戒台寺</text></g>
          <g font-size="16" fill="#5577e6"><text x="314" y="745">叁三站</text><text x="965" y="922">北京西站</text><text x="1233" y="1044">北京南站</text><text x="1417" y="855">北京站</text></g>
          <g font-size="16" fill="#3fa9dc"><text x="1882" y="317">北京翡翠湖国际</text><text x="1914" y="335">康体俱乐部</text></g>
          <g font-size="16" fill="#7d93bd"><text x="137" y="357">军庄镇</text><text x="2319" y="545">小</text><text x="2319" y="562">中</text><text x="2319" y="579">河</text><text x="2412" y="858" transform="rotate(45 2412 858)">北运河</text></g>
          <g font-size="20" fill="#5c6069"><text x="110" y="673">门头沟区</text><text x="580" y="846">石景山区</text><text x="880" y="577">海淀区</text><text x="1137" y="812">西城区</text><text x="831" y="1077">丰台区</text><text x="1328" y="729">东城区</text><text x="1432" y="771">朝阳区</text></g>
          <g font-size="16" fill="#4c4f57"><text x="867" y="482">海淀公园</text><text x="995" y="273">箭亭桥</text><text x="1199" y="531">马甸桥</text><text x="1538" y="517">四元桥</text><text x="1658" y="378">五元桥</text><text x="1737" y="289">北皋桥</text><text x="1931" y="197">温榆桥</text><text x="2284" y="194">李天桥</text><text x="1827" y="825">远通桥</text><text x="2135" y="1090">番会二桥</text></g>
          <g font-size="18" font-weight="700" fill="#3c3c3e"><text x="1087" y="261">北五环</text><text x="955" y="447">北四环</text><text x="945" y="836">复兴路</text><text x="1158" y="1092" transform="rotate(-5 1158 1092)">南三环</text><text x="1300" y="1011">南二环</text><text x="586" y="588">西</text><text x="584" y="606">五</text><text x="579" y="624">环</text><text x="692" y="566">阜</text><text x="697" y="585">石</text><text x="700" y="604">路</text><text x="1510" y="294" transform="rotate(6 1510 294)">北五环</text><text x="1592" y="495" transform="rotate(-53 1592 495)">京承高速</text><text x="1815" y="160" transform="rotate(-65 1815 160)">京密路</text><text x="1763" y="785">朝阳路</text><text x="2072" y="902">广渠快速路</text><text x="2528" y="198" transform="rotate(14 2528 198)">京平高速</text><text x="2482" y="757" transform="rotate(-14 2482 757)">通燕高速</text><text x="2500" y="1050" transform="rotate(16 2500 1050)">京塘路</text></g>
        </svg>
        <div class="absolute top-0 right-0 flex h-9 items-center rounded-[7px] bg-white pr-[6px] pl-2 text-[18px] text-[#595959] shadow-[0_2px_10px_rgba(0,0,0,0.10)]">
          <svg class="size-[19px]" viewBox="0 0 19 19" fill="#595959"><path d="M0 0h4.500v4.500H0zM6 0h7v4.500H6zM14.500 0H19v4.500h-4.500zM0 6h4.500v7H0zM6 6h7v7H6zM14.500 6H19v7h-4.500zM0 14.500h4.500V19H0zM6 14.500h7V19H6zM14.500 14.500H19V19h-4.500z"/></svg>
          <span class="ml-1">map</span>
          <span class="ml-1 h-[22px] w-px bg-[#dedede]"></span>
          <button aria-label="Delete map" class="ml-2 size-[23px]"><svg class="size-full" viewBox="0 0 23 23" fill="none" stroke="#595959" stroke-width="1.600"><path d="M0 5h22.500M7 5V1.500h8V5M3 5v17h17V5M9 9.500v7M14 9.500v7"/></svg></button>
        </div>
      </div>
    </div>
  </section>

  <aside aria-label="map" class="w-[792px] shrink-0 rounded-l-lg bg-white shadow-[0_4px_20px_rgba(0,0,0,0.09)]">
    <div class="flex h-[99px] items-center border-b border-[#e5e5ec] px-[29px]">
      <h2 class="text-[28px] font-medium text-black">map</h2>
      <button aria-label="Pin panel" class="ml-auto size-11 rounded-full bg-[#f0f0f0]"><svg class="size-full"><use href="#pushpin"/></svg></button>
      <button aria-label="Close panel" class="ml-[13px] size-11 rounded-full bg-[#f0f0f0]"><svg class="size-full"><use href="#cross"/></svg></button>
    </div>
    <div class="flex h-[83px] gap-[188px] pt-6 pl-[211px]">
      <button class="relative self-start text-[#2362fb]">property<span class="absolute top-[56px] left-0 h-[3px] w-full bg-[#2362fb]"></span></button>
      <button class="self-start text-[#595959]">Fields</button>
    </div>
    <form class="px-[29px] pt-[88px]">
      <h3 class="border-l-[3px] border-[#2362fb] pl-[11px] text-[28px] leading-[34px] font-bold">Base</h3>
      <label for="title" class="mt-[38px] mb-6 block text-[25px] font-bold">title</label>
      <input id="title" type="text" placeholder="title" class="block h-[72px] w-full rounded-[6px] border border-[#e5e5ec] px-5 placeholder:text-[#bfbfbf]">
      <div class="mt-[43px] flex h-[43px] items-center justify-between">
        <label for="hide" class="text-[25px] font-bold">Hide title</label>
        <input id="hide" type="checkbox" role="switch" class="flex h-[43px] w-[79px] appearance-none items-center rounded-full bg-[#bfbfbf] pl-1 before:size-[33px] before:rounded-full before:bg-white before:shadow-[0_4px_8px_rgba(0,35,11,0.2)]">
      </div>
      <hr class="mt-[58px] border-[#e8e8ec]">
      <h3 class="mt-[87px] border-l-[3px] border-[#2362fb] pl-[11px] text-[28px] leading-[34px] font-bold">Interaction</h3>
      <label for="width" class="mt-[38px] mb-6 block text-[25px] font-bold">width</label>
      <div class="relative">
        <select id="width" class="block h-[72px] w-full appearance-none rounded-[6px] border border-[#e5e5ec] bg-white px-[21px]"><option>1/2</option></select>
        <svg class="pointer-events-none absolute top-[26px] right-[22px] size-5" viewBox="0 0 20 20" fill="none" stroke="#bfbfbf" stroke-width="1.800"><path d="M1 4l9 11 9-11"/></svg>
      </div>
      <label for="devices" class="mt-[38px] mb-[23px] block text-[25px] font-bold">Display Devices</label>
      <div class="relative">
        <select id="devices" class="block h-[72px] w-full appearance-none rounded-[6px] border border-[#e5e5ec] bg-white px-5 text-[#bfbfbf]"><option>Display Devices</option></select>
        <svg class="pointer-events-none absolute top-[26px] right-[25px] size-5" viewBox="0 0 20 20" fill="none" stroke="#bfbfbf" stroke-width="2"><path d="M1 4l9 11 9-11"/></svg>
      </div>
    </form>
  </aside>
</main>
</body>
</html>
